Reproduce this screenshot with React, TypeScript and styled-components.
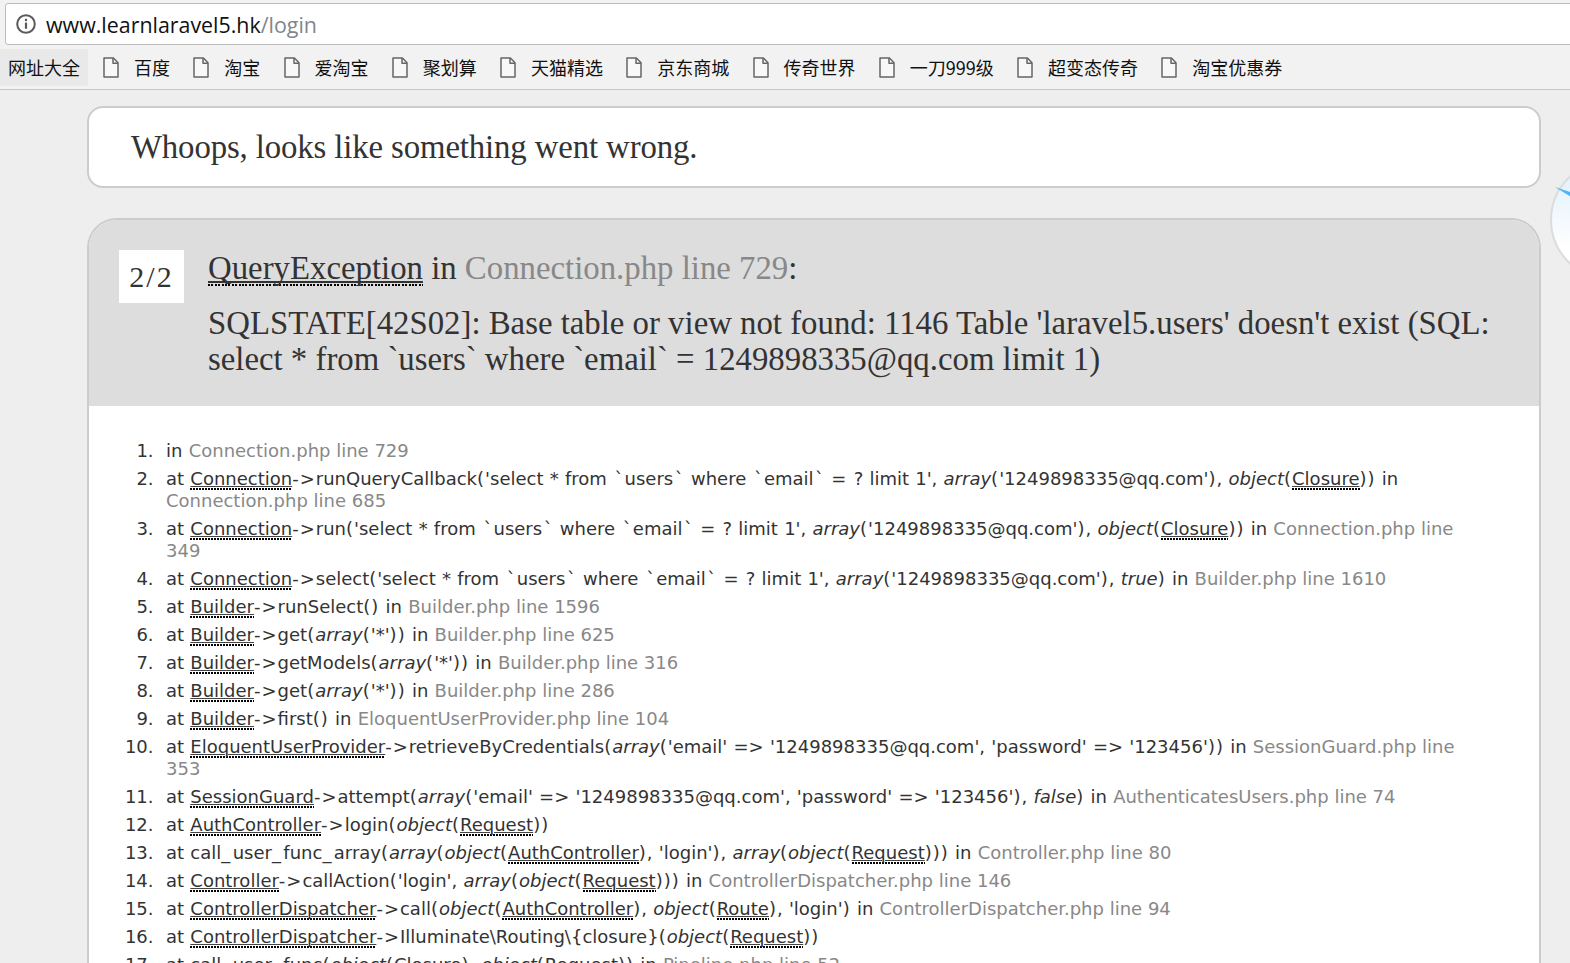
import React from "react";
import styled, { createGlobalStyle } from "styled-components";

const bookmarks = ["百度", "淘宝", "爱淘宝", "聚划算", "天猫精选", "京东商城", "传奇世界", "一刀999级", "超变态传奇", "淘宝优惠券"];

type Part = [kind: "t" | "a" | "e" | "f", text: string];

const t = (s: string): Part => ["t", s];
const a = (s: string): Part => ["a", s];
const e = (s: string): Part => ["e", s];
const f = (s: string): Part => ["f", s];

const trace: Part[][] = [
  [t("in "), f("Connection.php line 729")],
  [t("at "), a("Connection"), t("->runQueryCallback('select * from `users` where `email` = ? limit 1', "), e("array"), t("('1249898335@qq.com'), "), e("object"), t("("), a("Closure"), t(")) in "), f("Connection.php line 685")],
  [t("at "), a("Connection"), t("->run('select * from `users` where `email` = ? limit 1', "), e("array"), t("('1249898335@qq.com'), "), e("object"), t("("), a("Closure"), t(")) in "), f("Connection.php line 349")],
  [t("at "), a("Connection"), t("->select('select * from `users` where `email` = ? limit 1', "), e("array"), t("('1249898335@qq.com'), "), e("true"), t(") in "), f("Builder.php line 1610")],
  [t("at "), a("Builder"), t("->runSelect() in "), f("Builder.php line 1596")],
  [t("at "), a("Builder"), t("->get("), e("array"), t("('*')) in "), f("Builder.php line 625")],
  [t("at "), a("Builder"), t("->getModels("), e("array"), t("('*')) in "), f("Builder.php line 316")],
  [t("at "), a("Builder"), t("->get("), e("array"), t("('*')) in "), f("Builder.php line 286")],
  [t("at "), a("Builder"), t("->first() in "), f("EloquentUserProvider.php line 104")],
  [t("at "), a("EloquentUserProvider"), t("->retrieveByCredentials("), e("array"), t("('email' => '1249898335@qq.com', 'password' => '123456')) in "), f("SessionGuard.php line 353")],
  [t("at "), a("SessionGuard"), t("->attempt("), e("array"), t("('email' => '1249898335@qq.com', 'password' => '123456'), "), e("false"), t(") in "), f("AuthenticatesUsers.php line 74")],
  [t("at "), a("AuthController"), t("->login("), e("object"), t("("), a("Request"), t("))")],
  [t("at call_user_func_array("), e("array"), t("("), e("object"), t("("), a("AuthController"), t("), 'login'), "), e("array"), t("("), e("object"), t("("), a("Request"), t("))) in "), f("Controller.php line 80")],
  [t("at "), a("Controller"), t("->callAction('login', "), e("array"), t("("), e("object"), t("("), a("Request"), t("))) in "), f("ControllerDispatcher.php line 146")],
  [t("at "), a("ControllerDispatcher"), t("->call("), e("object"), t("("), a("AuthController"), t("), "), e("object"), t("("), a("Route"), t("), 'login') in "), f("ControllerDispatcher.php line 94")],
  [t("at "), a("ControllerDispatcher"), t("->Illuminate\\Routing\\{closure}("), e("object"), t("("), a("Request"), t("))")],
  [t("at call_user_func("), e("object"), t("("), a("Closure"), t("), "), e("object"), t("("), a("Request"), t(")) in "), f("Pipeline.php line 52")],
];

// the punctuation of the original font runs wider than DejaVu's
const renderCode = (text: string) =>
  text.split(/(=>|`|->|_|[()=])/).map((piece, i) => {
    if (piece === "`") return <Tick key={i}>{piece}</Tick>;
    if (piece === "_") return <Underscore key={i}>{piece}</Underscore>;
    if (piece === "->" || piece === "(" || piece === ")" || piece === "=") return <Punct key={i}>{piece}</Punct>;
    return <React.Fragment key={i}>{piece}</React.Fragment>;
  });

const FileIcon = () => (
  <svg width="16" height="21" viewBox="0 0 16 21" fill="none" stroke="#666" strokeWidth="1.5" strokeLinejoin="round">
    <path d="M1 1h9.4L15 5.8V20H1z" fill="#f8f8f8" />
    <path d="M10 1v5.2h5" />
  </svg>
);

const InfoIcon = () => (
  <svg width="20" height="20" viewBox="0 0 20 20" fill="none">
    <circle cx="10" cy="10" r="8.8" stroke="#5a5a5a" strokeWidth="2" />
    <path d="M10 8.6v6.2" stroke="#5a5a5a" strokeWidth="2.2" />
    <path d="M10 4.8v2.3" stroke="#5a5a5a" strokeWidth="2.2" />
  </svg>
);

const App: React.FC = () => {
  return (
    <Page>
      <GlobalStyle />
      <AddressRow>
        <AddressBar>
          <InfoIcon />
          <Url>
            www.learnlaravel5.hk<UrlPath>/login</UrlPath>
          </Url>
        </AddressBar>
      </AddressRow>
      <BookmarkBar>
        <FirstBookmark>网址大全</FirstBookmark>
        {bookmarks.map((b) => (
          <Bookmark key={b}>
            <FileIcon />
            <span>{b}</span>
          </Bookmark>
        ))}
      </BookmarkBar>
      <Content>
        <MessageBox>Whoops, looks like something went wrong.</MessageBox>
        <ExceptionBox>
          <ExceptionHeader>
            <Counter>2/2</Counter>
            <Heading>
              <Title>
                <HeadAbbr>QueryException</HeadAbbr> in <FileRef>Connection.php line 729</FileRef>:
              </Title>
              <Message>
                SQLSTATE[42S02]: Base table or view not found: 1146 Table 'laravel5.users' doesn't exist (SQL: select * from `users` where `email` = 1249898335@qq.com limit 1)
              </Message>
            </Heading>
          </ExceptionHeader>
          <TraceBody>
            <TraceList>
              {trace.map((parts, i) => (
                <TraceItem key={i}>
                  {parts.map(([kind, text], j) => {
                    if (kind === "a") return <Abbr key={j}>{text}</Abbr>;
                    if (kind === "e") return <em key={j}>{text}</em>;
                    if (kind === "f") return <FileRef key={j}>{text}</FileRef>;
                    return <React.Fragment key={j}>{renderCode(text)}</React.Fragment>;
                  })}
                </TraceItem>
              ))}
            </TraceList>
          </TraceBody>
        </ExceptionBox>
      </Content>
      <FloatBall>
        <Needle width="18" height="14" viewBox="0 0 18 14">
          <path d="M0 0 L18 6 L18 11 Z" fill="#4db4f5" />
        </Needle>
      </FloatBall>
    </Page>
  );
};

export default App;

/** ============================= styled-components ============================= */

const GlobalStyle = createGlobalStyle`
  html, body {
    margin: 0;
    padding: 0;
    height: 963px;
    overflow: hidden;
    background: #eeeeee;
  }
`;

const Page = styled.div`
  position: relative;
  width: 1570px;
  height: 963px;
  overflow: hidden;
  background: #eeeeee;
`;

const AddressRow = styled.div`
  height: 45px;
  padding: 3px 0 0 5px;
  box-sizing: border-box;
  background: #f2f2f2;
`;

const AddressBar = styled.div`
  height: 42px;
  box-sizing: border-box;
  display: flex;
  align-items: center;
  gap: 10px;
  padding-left: 10px;
  margin-right: -10px;
  background: #fff;
  border: 1px solid #bdbdbd;
  border-radius: 3px;
`;

const Url = styled.div`
  font: 21.4px "Open Sans", "Liberation Sans", sans-serif;
  color: #111;
`;

const UrlPath = styled.span`
  color: #80868b;
`;

const BookmarkBar = styled.div`
  height: 45px;
  box-sizing: border-box;
  display: flex;
  align-items: center;
  background: #f2f2f2;
  border-bottom: 1px solid #c6c6c6;
  font: 18px "Noto Sans CJK SC", sans-serif;
  color: #111;
`;

const FirstBookmark = styled.div`
  width: 88px;
  height: 37px;
  margin-right: 15px;
  padding-left: 8px;
  box-sizing: border-box;
  display: flex;
  align-items: center;
  background: #e9e9e9;
`;

const Bookmark = styled.div`
  display: flex;
  align-items: center;
  gap: 15px;
  margin-right: 23.25px;
`;

const Content = styled.div`
  padding: 16px 29px 0 87px;
`;

const MessageBox = styled.div`
  height: 82px;
  box-sizing: border-box;
  display: flex;
  align-items: center;
  padding-left: 42px;
  background: #fff;
  border: 2px solid #ccc;
  border-radius: 16px;
  font: 32.8px "Liberation Serif", Georgia, serif;
  letter-spacing: -0.12px;
  color: #333;
`;

const ExceptionBox = styled.div`
  margin-top: 30px;
  background: #fff;
  border: 2px solid #ccc;
  border-radius: 30px 30px 0 0;
  overflow: hidden;
`;

const ExceptionHeader = styled.div`
  height: 186px;
  box-sizing: border-box;
  display: flex;
  align-items: flex-start;
  padding: 30px 36px 0 30px;
  background: #ddd;
  font-family: "Liberation Serif", Georgia, serif;
  color: #333;
`;

const Counter = styled.div`
  width: 65px;
  height: 53px;
  flex: none;
  margin-right: 24px;
  display: flex;
  align-items: center;
  justify-content: center;
  background: #fff;
  font-size: 30px;
  letter-spacing: 2px;
`;

const Heading = styled.div`
  flex: 1;
`;

const Title = styled.div`
  font-size: 32.8px;
  line-height: 36px;
`;

const Message = styled.div`
  margin-top: 19px;
  font-size: 32.8px;
  line-height: 36px;
`;

const HeadAbbr = styled.span`
  text-decoration: underline 2px #333;
  text-underline-offset: 2px;
  text-decoration-skip-ink: none;
  background: repeating-linear-gradient(90deg, #000 0 2px, transparent 2px 3.4px) left bottom / 100% 2px no-repeat;
`;

const Abbr = styled.span`
  padding-bottom: 1px;
  text-decoration: underline 1px #444;
  text-underline-offset: 1px;
  background: repeating-linear-gradient(90deg, #000 0 2px, transparent 2px 3px) left bottom / 100% 2px no-repeat;
`;

const FileRef = styled.span`
  color: #888;
  word-spacing: 0;
`;

const Tick = styled.span`
  margin: 0 1px 0 1.5px;
`;

const Punct = styled.span`
  letter-spacing: 1px;
`;

const Underscore = styled.span`
  letter-spacing: 2.4px;
`;

const TraceBody = styled.div`
  height: 600px;
  padding: 34px 55px 0 0;
`;

const TraceList = styled.ol`
  margin: 0;
  padding: 0 0 0 77px;
  font: 18px/22px "DejaVu Sans", Verdana, sans-serif;
  color: #333;
  word-spacing: 0.5px;
`;

const TraceItem = styled.li`
  margin-bottom: 6px;

  &::marker {
    content: counter(list-item) ".  ";
  }
`;

const FloatBall = styled.div`
  position: absolute;
  left: 1550px;
  top: 160px;
  width: 120px;
  height: 120px;
  border-radius: 50%;
  box-sizing: border-box;
  border: 2px solid #dcdcdc;
  background: linear-gradient(#dceefc, #ffffff 75%);
`;

const Needle = styled.svg`
  position: absolute;
  left: 3px;
  top: 25px;
`;
